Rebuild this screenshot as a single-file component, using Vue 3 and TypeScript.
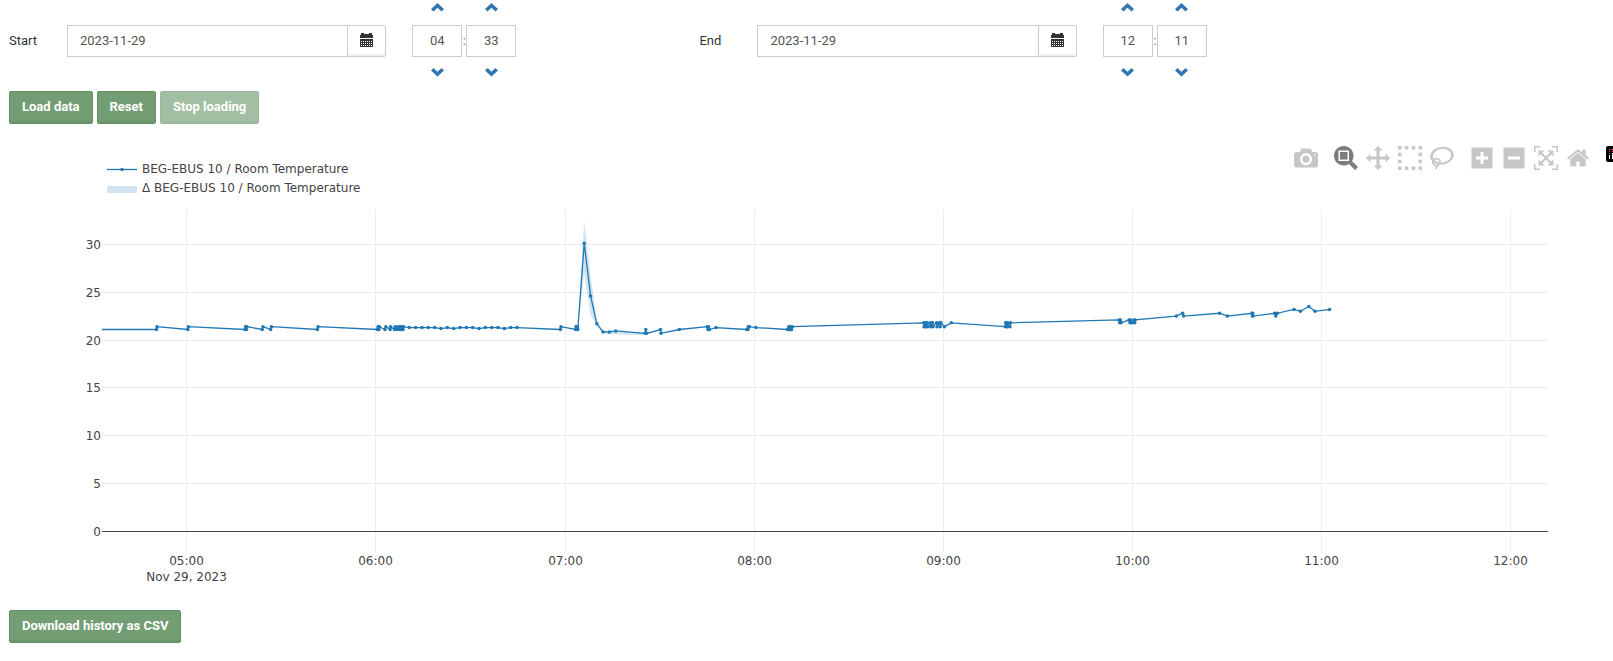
<script setup lang="ts">
import { computed, onBeforeUnmount, onMounted, reactive, ref } from 'vue'

interface Range {
  id: string
  label: string
  date: string
  hour: string
  minute: string
}

interface Icon {
  name: string
  width: number
  path: string
}

const ranges = reactive<Range[]>([
  { id: 'start', label: 'Start', date: '2023-11-29', hour: '04', minute: '33' },
  { id: 'end', label: 'End', date: '2023-11-29', hour: '12', minute: '11' },
])

function step(range: Range, part: 'hour' | 'minute', delta: number) {
  const size = part === 'hour' ? 24 : 60
  const next = (Number(range[part]) + delta + size) % size
  range[part] = String(next).padStart(2, '0')
}

const modeGroups: Icon[][] = [
  [
    {
      name: 'Download plot as a png',
      width: 1000,
      path: 'm500 450c-83 0-150-67-150-150 0-83 67-150 150-150 83 0 150 67 150 150 0 83-67 150-150 150z m400 150h-120c-16 0-34 13-39 29l-31 93c-6 15-23 28-40 28h-340c-16 0-34-13-39-28l-31-94c-6-15-23-28-40-28h-120c-55 0-100-45-100-100v-450c0-55 45-100 100-100h800c55 0 100 45 100 100v450c0 55-45 100-100 100z m-400-550c-138 0-250 112-250 250 0 138 112 250 250 250 138 0 250-112 250-250 0-138-112-250-250-250z m365 380c-19 0-35 16-35 35 0 19 16 35 35 35 19 0 35-16 35-35 0-19-16-35-35-35z',
    },
  ],
  [
    {
      name: 'Zoom',
      width: 1000,
      path: 'm1000-25l-250 251c40 63 63 138 63 218 0 224-182 406-407 406-224 0-406-182-406-406s183-406 407-406c80 0 155 22 218 62l250-250 125 125z m-812 250l0 438 437 0 0-438-437 0z m62 375l313 0 0-312-313 0 0 312z',
    },
    {
      name: 'Pan',
      width: 1000,
      path: 'm1000 350l-187 188 0-125-250 0 0 250 125 0-188 187-187-187 125 0 0-250-250 0 0 125-188-188 186-187 0 125 252 0 0-250-125 0 187-188 188 188-125 0 0 250 250 0 0-126 187 188z',
    },
    {
      name: 'Box Select',
      width: 1000,
      path: 'm0 850l0-143 143 0 0 143-143 0z m286 0l0-143 143 0 0 143-143 0z m285 0l0-143 143 0 0 143-143 0z m286 0l0-143 143 0 0 143-143 0z m-857-286l0-143 143 0 0 143-143 0z m857 0l0-143 143 0 0 143-143 0z m-857-285l0-143 143 0 0 143-143 0z m857 0l0-143 143 0 0 143-143 0z m-857-286l0-143 143 0 0 143-143 0z m286 0l0-143 143 0 0 143-143 0z m285 0l0-143 143 0 0 143-143 0z m286 0l0-143 143 0 0 143-143 0z',
    },
    {
      name: 'Lasso Select',
      width: 1031,
      path: 'm1018 538c-36 207-290 336-568 286-277-48-473-256-436-463 10-57 36-108 76-151-13-66 11-137 68-183 34-28 75-41 114-42l-55-70 0 0c-2-1-3-2-4-3-10-14-8-34 5-45 14-11 34-8 45 4 1 1 2 3 2 5l0 0 113 140c16 11 31 24 45 40 4 3 6 7 8 11 48-3 100 0 151 9 278 48 473 255 436 462z m-624-379c-80 14-149 48-197 96 42 42 109 47 156 9 33-26 47-66 41-105z m-187-74c-19 16-33 37-39 60 50-32 109-55 174-68-42-25-95-24-135 8z m360 75c-34-7-69-9-102-8 8 62-16 128-68 170-73 59-175 54-244-5-9 20-16 40-20 61-28 159 121 317 333 354s407-60 434-217c28-159-121-318-333-355z',
    },
  ],
  [
    {
      name: 'Zoom in',
      width: 875,
      path: 'm1 787l0-875 875 0 0 875-875 0z m687-500l-187 0 0-187-125 0 0 187-188 0 0 125 188 0 0 187 125 0 0-187 187 0 0-125z',
    },
    {
      name: 'Zoom out',
      width: 875,
      path: 'm0 788l0-876 875 0 0 876-875 0z m688-500l-500 0 0 125 500 0 0-125z',
    },
    {
      name: 'Autoscale',
      width: 1000,
      path: 'm250 850l-187 0-63 0 0-62 0-188 63 0 0 188 187 0 0 62z m688 0l-188 0 0-62 188 0 0-188 62 0 0 188 0 62-62 0z m-875-938l0 188-63 0 0-188 0-62 63 0 187 0 0 62-187 0z m875 188l0-188-188 0 0-62 188 0 62 0 0 62 0 188-62 0z m-125 188l-1 0-93-94-156 156 156 156 92-93 2 0 0 250-250 0 0-2 93-92-156-156-156 156 94 92 0 2-250 0 0-250 0 0 93 93 157-156-157-156-93 94 0 0 0-250 250 0 0 0-94 93 156 157 156-157-93-93 0 0 250 0 0 250z',
    },
    {
      name: 'Reset axes',
      width: 929,
      path: 'm786 296v-267q0-15-11-26t-25-10h-214v214h-143v-214h-214q-15 0-25 10t-11 26v267q0 1 0 2t0 2l321 264 321-264q1-1 1-4z m124 39l-34-41q-5-5-12-6h-2q-7 0-12 3l-386 322-386-322q-7-4-13-4-7 2-12 7l-35 41q-4 5-3 13t6 12l401 334q18 15 42 15t43-15l136-114v109q0 8 5 13t13 5h107q8 0 13-5t5-13v-227l122-102q5-5 6-12t-4-13z',
    },
  ],
]
const activeMode = ref('Zoom')

// Samples as [step, temperature]; the visible time range is divided into STEPS equal steps.
const STEPS = 1446
const STEPS_PER_HOUR = 189.15
const samples: [number, number][] = [
  [0, 21.1], [54.5, 21.1], [55, 21.4], [85.8, 21.1], [86.3, 21.4],
  [143, 21.1], [143.6, 21.4], [144.6, 21.1], [144.8, 21.4], [160.2, 21.1], [161, 21.4],
  [168.6, 21.1], [169.4, 21.4], [215.4, 21.1], [216, 21.4],
  [275.4, 21.1], [276, 21.4], [277, 21.1], [277.4, 21.4], [283, 21.1], [283.8, 21.4],
  [288.2, 21.1], [288.6, 21.4], [292.6, 21.1], [293, 21.4], [295, 21.1], [295.6, 21.4],
  [297.4, 21.1], [298, 21.4], [299.6, 21.1], [300, 21.4], [301, 21.1], [301.4, 21.4],
  [307.3, 21.3], [313.7, 21.3], [320, 21.3], [326.3, 21.3], [332.7, 21.3], [339, 21.2],
  [345.3, 21.3], [351.7, 21.2], [358, 21.3], [364.3, 21.3], [370.7, 21.3], [377, 21.2],
  [383.3, 21.3], [389.7, 21.3], [396, 21.3], [402.3, 21.2], [408.7, 21.3], [415, 21.3],
  [458.4, 21.1], [459, 21.4], [473.6, 21.1], [474, 21.4], [475.2, 21.1], [475.5, 21.4],
  [475.8, 21.1], [482.2, 30.1], [488.6, 24.6], [494.8, 21.7], [501, 20.85], [507.3, 20.85],
  [513.7, 20.95], [543, 20.7], [543.8, 21.1], [544.6, 20.7], [558.5, 21.1], [559, 20.7],
  [577.3, 21.1], [605.2, 21.4], [606, 21.1], [606.6, 21.4], [607.4, 21.1], [614, 21.3],
  [644.8, 21.1], [646, 21.1], [646.2, 21.4], [647.4, 21.4], [654, 21.3],
  [685.4, 21.1], [686.8, 21.4], [687.6, 21.1], [688.8, 21.4], [689.6, 21.1], [690.4, 21.4],
  [821.6, 21.8], [822, 21.4], [823.4, 21.8], [824, 21.4], [825.4, 21.8], [826, 21.4],
  [828.6, 21.8], [829, 21.4], [830.6, 21.8], [831, 21.4], [834.6, 21.8], [835, 21.4],
  [837.6, 21.8], [838.2, 21.4], [839, 21.8], [842.3, 21.4], [849.3, 21.8],
  [903.2, 21.4], [903.6, 21.8], [905.4, 21.4], [905.8, 21.8], [908, 21.4], [908.6, 21.8],
  [1017, 22.1], [1017.8, 21.8], [1018.4, 22.1], [1019, 21.8], [1027, 22.1], [1028, 21.8],
  [1029, 22.1], [1030.4, 21.8], [1032.4, 22.1], [1032.8, 21.8], [1033, 22.1],
  [1074.3, 22.5], [1080.6, 22.8], [1081.6, 22.5], [1117.6, 22.8], [1125.4, 22.5],
  [1150, 22.8], [1150.4, 22.5], [1150.8, 22.8], [1151, 22.5], [1172.6, 22.8], [1173.8, 22.5],
  [1175.4, 22.8], [1192, 23.2], [1198.4, 23], [1206.8, 23.5], [1213, 23], [1227.6, 23.2],
]
const band = [
  [475.8, 21.4], [482.2, 32.4], [488.6, 26.8], [494.8, 22], [501, 20.9], [543, 20.8],
  [543, 20.5], [507.3, 20.6], [501, 20.7], [494.8, 21.6], [488.6, 22.6], [482.2, 27], [475.8, 21.1],
]

const LEFT = 102
const RIGHT = 65
const ZERO = 331.5
const UNIT = 9.573

const canvas = ref<SVGSVGElement | null>(null)
const width = ref(1600)
let observer: ResizeObserver | undefined

onMounted(() => {
  const measure = () => {
    if (canvas.value) width.value = canvas.value.getBoundingClientRect().width
  }
  measure()
  observer = new ResizeObserver(measure)
  if (canvas.value) observer.observe(canvas.value)
})
onBeforeUnmount(() => observer?.disconnect())

const right = computed(() => width.value - RIGHT)
const px = (t: number) => LEFT + (t * (right.value - LEFT)) / STEPS
const py = (v: number) => ZERO - v * UNIT
const crisp = (n: number) => Math.floor(n) + 0.5
const toPoints = (list: number[][]) => list.map(([t, v]) => `${px(t)},${py(v)}`).join(' ')

const xTicks = computed(() =>
  [5, 6, 7, 8, 9, 10, 11, 12].map((hour) => ({
    x: crisp(px(84.8 + (hour - 5) * STEPS_PER_HOUR)),
    text: `${String(hour).padStart(2, '0')}:00`,
  })),
)
const yTicks = [0, 5, 10, 15, 20, 25, 30].map((v) => ({ y: crisp(py(v)), v }))
</script>

<template>
  <main class="page">
    <form class="ranges" @submit.prevent>
      <div v-for="r in ranges" :key="r.id" class="range">
        <label :for="r.id">{{ r.label }}</label>
        <div class="date">
          <input :id="r.id" v-model="r.date" type="text" />
          <button type="button" :aria-label="`Pick ${r.label} date`">
            <svg width="13" height="14" viewBox="0 0 13 14">
              <path d="M0 2h1V0h3v1h5V0h3v2h1v3H0z" fill="#333" />
              <path d="M0 6h13v8H0z" fill="#333" />
              <path
                d="M1 8h11M1 10h11M1 12h11"
                stroke="#fff"
                stroke-width="1"
                stroke-dasharray="1 1"
                transform="translate(0 .5)"
              />
            </svg>
          </button>
        </div>
        <div class="time">
          <template v-for="part in (['hour', 'minute'] as const)" :key="part">
            <span v-if="part === 'minute'" class="colon">:</span>
            <div class="spinner">
              <button type="button" :aria-label="`${r.label} ${part} up`" @click="step(r, part, 1)">
                <svg width="13" height="9" viewBox="0 0 13 9">
                  <path d="M6.5 0 13 6 10.5 8.5 6.5 4.8 2.5 8.5 0 6z" fill="#3276b1" />
                </svg>
              </button>
              <input v-model="r[part]" type="text" maxlength="2" :aria-label="`${r.label} ${part}`" />
              <button
                type="button"
                class="down"
                :aria-label="`${r.label} ${part} down`"
                @click="step(r, part, -1)"
              >
                <svg width="13" height="9" viewBox="0 0 13 9">
                  <path d="M6.5 8.5 13 2.5 10.5 0 6.5 3.7 2.5 0 0 2.5z" fill="#3276b1" />
                </svg>
              </button>
            </div>
          </template>
        </div>
      </div>
    </form>

    <div class="actions">
      <button type="button" class="btn">Load data</button>
      <button type="button" class="btn">Reset</button>
      <button type="button" class="btn" disabled>Stop loading</button>
    </div>

    <section class="chart">
      <header class="chart-head">
        <ul class="legend">
          <li>
            <svg width="30" height="19">
              <path d="M0 9.5h30" stroke="#1f77b4" stroke-width="1.3" />
              <circle cx="15" cy="9.5" r="1.75" fill="#1f77b4" />
            </svg>
            BEG-EBUS 10 / Room Temperature
          </li>
          <li>
            <svg width="30" height="19"><path d="M0 7h30v7H0z" fill="#d2e4f0" /></svg>
            Δ BEG-EBUS 10 / Room Temperature
          </li>
        </ul>
        <div class="modebar">
          <div v-for="(group, i) in modeGroups" :key="i" class="mode-group">
            <button
              v-for="icon in group"
              :key="icon.name"
              type="button"
              :aria-label="icon.name"
              :class="{ active: icon.name === activeMode }"
              @click="activeMode = icon.name"
            >
              <svg width="24" height="24" :viewBox="`0 0 ${icon.width} 1000`">
                <path :d="icon.path" transform="matrix(1 0 0 -1 0 850)" />
              </svg>
            </button>
          </div>
          <a class="brand" href="#" aria-label="Produced with Plotly">
            <svg width="49" height="16" viewBox="0 0 49 16">
              <rect width="49" height="16" rx="2" fill="#000" />
              <path d="M3 3h1v1H3zM5 3h1v1H5zM3 5h1v1H3zM3 7h1v1H3zM6 5h1v1H6z" fill="#e5406f" />
              <path d="M3 9h1v4H3zM6 7h2v6H6z" fill="#fff" />
              <path d="M6 3h1v1H6z" fill="#e5406f" />
            </svg>
          </a>
        </div>
      </header>

      <svg ref="canvas" class="plot" role="img" aria-label="Room temperature over time">
        <g stroke="#eee">
          <path v-for="t in xTicks" :key="t.text" :d="`M${t.x} 9V352`" />
          <path v-for="t in yTicks" :key="t.v" :d="`M${LEFT} ${t.y}H${right}`" />
        </g>
        <path :d="`M${LEFT} ${ZERO}H${right}`" stroke="#444" />
        <polygon :points="toPoints(band)" fill="#1f77b4" fill-opacity="0.2" />
        <polyline :points="toPoints(samples)" fill="none" stroke="#1f77b4" stroke-width="1.3" />
        <circle
          v-for="([t, v], i) in samples.slice(1)"
          :key="i"
          :cx="px(t)"
          :cy="py(v)"
          r="1.75"
          fill="#1f77b4"
        />
        <g text-anchor="end">
          <text v-for="t in yTicks" :key="t.v" x="101" :y="t.y + 4.5">{{ t.v }}</text>
        </g>
        <g text-anchor="middle">
          <text v-for="t in xTicks" :key="t.text" :x="t.x" y="365">{{ t.text }}</text>
          <text :x="xTicks[0].x" y="381">Nov 29, 2023</text>
        </g>
      </svg>
    </section>

    <div class="export">
      <button type="button" class="btn">Download history as CSV</button>
    </div>
  </main>
</template>

<style>
body {
  background: #fff;
}
</style>

<style scoped>
.page {
  overflow: hidden;
  font: 13px/18px Roboto, 'Liberation Sans', sans-serif;
  color: #333;
}
.page *,
.page *::before {
  box-sizing: border-box;
}
button,
input {
  margin: 0;
  font: inherit;
}
button {
  cursor: pointer;
}
svg {
  display: block;
  flex: none;
}
.ranges {
  display: grid;
  grid-template-columns: 3fr 3fr 1fr;
  padding-right: 2px;
}
.range {
  display: grid;
  grid-template-columns: 58px 21fr 20fr;
  align-items: center;
  padding-left: 9px;
}
.date {
  display: flex;
}
.date input {
  flex: 1;
  min-width: 0;
  height: 32px;
  padding: 5px 12px 7px;
  border: 1px solid #ccc;
  border-radius: 0;
  color: #555;
}
.date button {
  display: flex;
  align-items: center;
  justify-content: center;
  width: 39px;
  margin-left: -1px;
  padding: 0 0 2px;
  border: 1px solid #ccc;
  border-radius: 0 2px 2px 0;
  background: #fff;
  box-shadow: inset 0 -2px 0 #f0f0f0;
}
.time {
  display: flex;
  align-items: center;
  padding-left: 26px;
}
.spinner {
  width: 50px;
}
.spinner button {
  display: flex;
  justify-content: center;
  width: 100%;
  height: 25px;
  padding: 3px 0 0;
  border: 0;
  background: none;
}
.spinner .down {
  padding-top: 11px;
}
.spinner input {
  display: block;
  width: 100%;
  height: 32px;
  padding: 0 0 2px;
  border: 1px solid #ccc;
  border-radius: 0;
  color: #555;
  text-align: center;
}
.colon {
  width: 4px;
  text-align: center;
  color: #777;
}
.actions {
  display: flex;
  gap: 4px;
  padding: 9px 9px 0;
}
.btn {
  height: 33px;
  padding: 0 12px 2px;
  border: 1px solid #659265;
  border-radius: 2px;
  background: #739e73;
  box-shadow: inset 0 -2px 0 rgba(0, 0, 0, 0.05);
  color: #fff;
  font-weight: 700;
}
.btn:disabled {
  opacity: 0.65;
  cursor: not-allowed;
}
.chart {
  margin-top: 22px;
  font: 12px/19px 'DejaVu Sans', Verdana, sans-serif;
  color: #444;
}
.chart-head {
  display: flex;
  justify-content: space-between;
  align-items: flex-start;
  height: 54px;
}
.legend {
  margin: 0;
  padding: 14px 0 0 107px;
  list-style: none;
}
.legend li {
  display: flex;
  gap: 5px;
}
.modebar {
  display: flex;
}
.mode-group {
  display: flex;
  gap: 8px;
  margin-right: 16px;
}
.mode-group button {
  padding: 0;
  border: 0;
  background: none;
  fill: #c7c7c7;
}
.mode-group .active {
  fill: #7c7c7c;
}
.brand {
  width: 7px;
  overflow: hidden;
}
.plot {
  width: 100%;
  height: 395px;
}
.plot text {
  fill: #444;
}
.export {
  padding: 15px 9px 18px;
}
</style>
